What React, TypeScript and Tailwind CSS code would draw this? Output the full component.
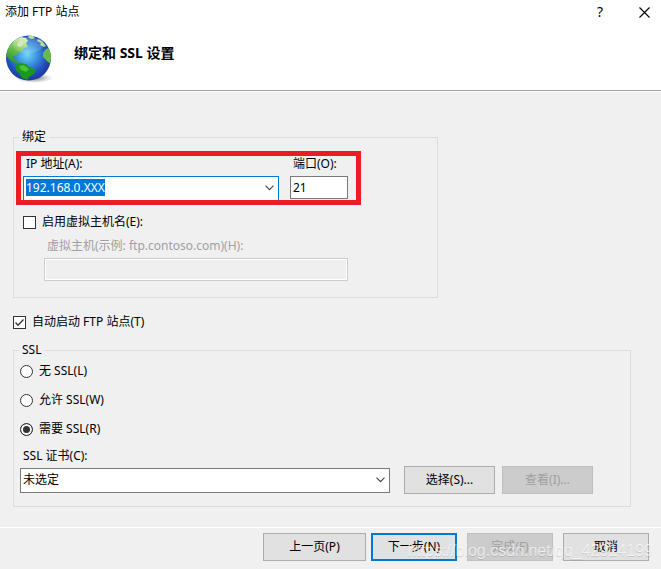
import React, { useEffect, useRef, useState } from 'react';
import { clsx } from 'clsx';

type SslMode = 'none' | 'allow' | 'require';

const SSL_OPTIONS: { value: SslMode; label: string }[] = [
  { value: 'none', label: '无 SSL(L)' },
  { value: 'allow', label: '允许 SSL(W)' },
  { value: 'require', label: '需要 SSL(R)' },
];

function Globe() {
  return (
    <svg width="48" height="50" viewBox="0 0 48 50" aria-hidden="true">
      <defs>
        <radialGradient id="ocean" cx="0.47" cy="0.42" r="0.62">
          <stop offset="0" stopColor="#74d6f7" />
          <stop offset="0.35" stopColor="#3c97e0" />
          <stop offset="0.7" stopColor="#2250bd" />
          <stop offset="1" stopColor="#1b2f94" />
        </radialGradient>
        <radialGradient id="shade" cx="0.5" cy="0.5" r="0.5">
          <stop offset="0" stopColor="#444" stopOpacity="0.8" />
          <stop offset="1" stopColor="#888" stopOpacity="0" />
        </radialGradient>
        <linearGradient id="land" x1="0.6" y1="0" x2="0.2" y2="1">
          <stop offset="0" stopColor="#d3ecab" />
          <stop offset="0.45" stopColor="#6cc04a" />
          <stop offset="1" stopColor="#1d8f2b" />
        </linearGradient>
        <clipPath id="disc">
          <circle cx="22.5" cy="23" r="22.5" />
        </clipPath>
      </defs>
      <ellipse cx="28" cy="43" rx="19" ry="5" fill="url(#shade)" />
      <circle cx="22.5" cy="23" r="22.5" fill="url(#ocean)" />
      <g clipPath="url(#disc)">
        <path d="M0 21 L2 13 L8 5 L15 2 L20 3 L22 6 L20 8 L22 12 L18 13 L16 17 L12 18 L10 21 L7 21 L8 24 L12 26 L13 29 L9 28 L5 26 L2 23Z" fill="url(#land)" />
        <path d="M12 8 L15 5 L18 7 L16 11 L13 12 L11 10Z" fill="#cfeab0" />
        <path d="M10 30 L14 28 L20 29 L23 32 L30 35 L28 39 L24 41 L21 45 L16 43 L13 38 L10 35Z" fill="#18981f" />
        <path d="M13 31 L18 30 L23 34 L20 37 L15 35Z" fill="#4ac136" />
        <path d="M22 1 L27 1 L29 3 L26 4 L23 3Z M32 4 L36 6 L40 11 L38 12 L34 10 L35 8 L31 6Z" fill="#b4da94" />
        <path d="M37 18 L40 14 L43 13 L47 17 L47 27 L43 28 L40 25 L37 22Z" fill="#68bb4b" />
      </g>
      <ellipse cx="22" cy="10" rx="15" ry="8" fill="#fff" opacity="0.14" />
    </svg>
  );
}

function Chevron() {
  return (
    <svg width="9" height="6" viewBox="0 0 9 6" fill="none" stroke="#444" strokeWidth="1.1" aria-hidden="true">
      <path d="M0.5 0.7 L4.5 4.7 L8.5 0.7" />
    </svg>
  );
}

interface PushButtonProps {
  children: React.ReactNode;
  className?: string;
  primary?: boolean;
  disabled?: boolean;
}

function PushButton({ children, className, primary, disabled }: PushButtonProps) {
  return (
    <button
      type="button"
      disabled={disabled}
      className={clsx(
        'flex h-7 items-center justify-center leading-4',
        primary ? 'border-2 border-[#0078d7]' : 'border',
        disabled ? 'border-[#bfbfbf] bg-[#cccccc] text-[#a0a0a0]' : 'bg-[#e1e1e1]',
        !primary && !disabled && 'border-[#adadad]',
        className
      )}
    >
      {children}
    </button>
  );
}

function TitleBar() {
  return (
    <div className="flex h-6 items-center justify-between pl-[5px]">
      <h1>添加 FTP 站点</h1>
      <div className="flex h-6">
        <button type="button" aria-label="帮助" className="w-8 text-center text-sm leading-6">
          ?
        </button>
        <button type="button" aria-label="关闭" className="flex w-[45px] items-center justify-center pl-3">
          <svg width="11" height="11" viewBox="0 0 11 11" stroke="#000" strokeWidth="1.1" aria-hidden="true">
            <path d="M0.5 0.5 L10.5 10.5 M10.5 0.5 L0.5 10.5" />
          </svg>
        </button>
      </div>
    </div>
  );
}

function BindingGroup() {
  const ipRef = useRef<HTMLInputElement>(null);
  const [ip, setIp] = useState('192.168.0.XXX');
  const [port, setPort] = useState('21');
  const [useHost, setUseHost] = useState(false);

  useEffect(() => {
    ipRef.current?.focus();
    ipRef.current?.select();
  }, []);

  return (
    <fieldset className="max-w-[425px] border border-[#dcdcdc] px-[9px] pb-4">
      <legend className="-ml-1 px-[3px]">绑定</legend>

      <div className="relative flex gap-[11px] pt-[11px]">
        <div className="w-64">
          <label htmlFor="ip" className="block h-5 pl-[3px]">
            IP 地址(A):
          </label>
          <div className="flex h-[25px] items-center border border-[#0078d7] bg-white pr-1 pb-0.5 pl-0.5">
            <input
              id="ip"
              ref={ipRef}
              value={ip}
              onChange={e => setIp(e.target.value)}
              className="h-[17px] min-w-0 flex-1 leading-[17px] outline-none selection:bg-[#0078d7] selection:text-white"
            />
            <button type="button" aria-label="IP 地址列表">
              <Chevron />
            </button>
          </div>
        </div>
        <div className="w-[58px]">
          <label htmlFor="port" className="block h-5 pl-[3px]">
            端口(O):
          </label>
          <input
            id="port"
            value={port}
            onChange={e => setPort(e.target.value)}
            className="block h-[23px] w-full border border-[#7a7a7a] bg-white px-0.5"
          />
        </div>
        {/* highlight frame */}
        <div className="pointer-events-none absolute top-1.5 -right-1.5 -bottom-1 -left-[7px] max-w-[345px] border-5 border-[#ed1c24]" />
      </div>

      <label className="mt-[13px] flex items-center gap-1.5">
        <input
          type="checkbox"
          checked={useHost}
          onChange={e => setUseHost(e.target.checked)}
          className="size-[13px] appearance-none border border-[#333] bg-white"
        />
        启用虚拟主机名(E):
      </label>
      <label htmlFor="host" className="mt-2 ml-6 block text-[#a0a0a0]">
        虚拟主机(示例: ftp.contoso.com)(H):
      </label>
      <input
        id="host"
        disabled={!useHost}
        className="mt-1 ml-[21px] block h-[23px] w-[304px] border border-[#cccccc] bg-[#efefef] ring-1 ring-white ring-inset"
      />
    </fieldset>
  );
}

function SslGroup() {
  const [mode, setMode] = useState<SslMode>('require');

  return (
    <fieldset className="border border-[#dcdcdc] px-1.5 pb-3">
      <legend className="-ml-px px-[3px]">SSL</legend>
      <div className="flex flex-col gap-[13px] pt-[5px]">
        {SSL_OPTIONS.map(option => (
          <label key={option.value} className="flex items-center gap-1.5">
            <input
              type="radio"
              name="ssl"
              checked={mode === option.value}
              onChange={() => setMode(option.value)}
              className="size-[13px] appearance-none rounded-full border border-[#333] bg-white checked:bg-[#333] checked:ring-2 checked:ring-white checked:ring-inset"
            />
            {option.label}
          </label>
        ))}
      </div>
      <label htmlFor="cert" className="mt-[11px] block pl-[3px]">
        SSL 证书(C):
      </label>
      <div className="mt-0.5 flex items-center gap-[7px]">
        <div className="relative mr-[7px] w-[370px]">
          <select id="cert" className="block h-[25px] w-full appearance-none border border-[#7a7a7a] bg-white pl-0.5">
            <option>未选定</option>
          </select>
          <span className="pointer-events-none absolute inset-y-0 right-[5px] flex items-center">
            <Chevron />
          </span>
        </div>
        <PushButton className="w-[91px]">选择(S)...</PushButton>
        <PushButton className="w-[91px]" disabled>
          查看(I)...
        </PushButton>
      </div>
    </fieldset>
  );
}

export default function App() {
  const [autoStart, setAutoStart] = useState(true);

  return (
    <div className="flex min-h-screen flex-col bg-[#f0f0f0] font-['Noto_Sans','Noto_Sans_CJK_SC',sans-serif] text-xs leading-4 text-black">
      <header className="border-b border-[#a0a0a0] bg-white pb-[5px]">
        <TitleBar />
        <div className="flex gap-5 pt-[11px] pl-1.5">
          <Globe />
          <h2 className="pt-2 text-sm leading-5 font-bold">绑定和 SSL 设置</h2>
        </div>
      </header>

      <main className="flex-1 border-t border-white pt-[37px] pr-[30px] pb-5 pl-[13px]">
        <BindingGroup />
        <label className="mt-4 mb-3 flex items-center gap-1.5">
          <span className="relative flex">
            <input
              type="checkbox"
              checked={autoStart}
              onChange={e => setAutoStart(e.target.checked)}
              className="size-[13px] appearance-none border border-[#333] bg-white"
            />
            {autoStart && (
              <svg className="pointer-events-none absolute inset-0" width="13" height="13" viewBox="0 0 13 13" fill="none" stroke="#333" strokeWidth="1.3">
                <path d="M2.5 6.5 L5 9.2 L10.5 3.5" />
              </svg>
            )}
          </span>
          自动启动 FTP 站点(T)
        </label>
        <SslGroup />
      </main>

      <footer className="relative flex justify-end gap-2.5 border-t border-white pt-[5px] pr-3 pb-2">
        <div className="flex gap-[5px]">
          <PushButton className="w-[103px]">上一页(P)</PushButton>
          <PushButton className="w-[86px]" primary>
            下一步(N)
          </PushButton>
        </div>
        <PushButton className="w-[86px]" disabled>
          完成(F)
        </PushButton>
        <PushButton className="w-[86px]">取消</PushButton>
        <span className="pointer-events-none absolute right-2 bottom-2 font-['Liberation_Sans',sans-serif] text-base leading-5 text-white/70 text-shadow-2xs">
          https://blog.csdn.net/qq_42914199
        </span>
      </footer>
    </div>
  );
}
